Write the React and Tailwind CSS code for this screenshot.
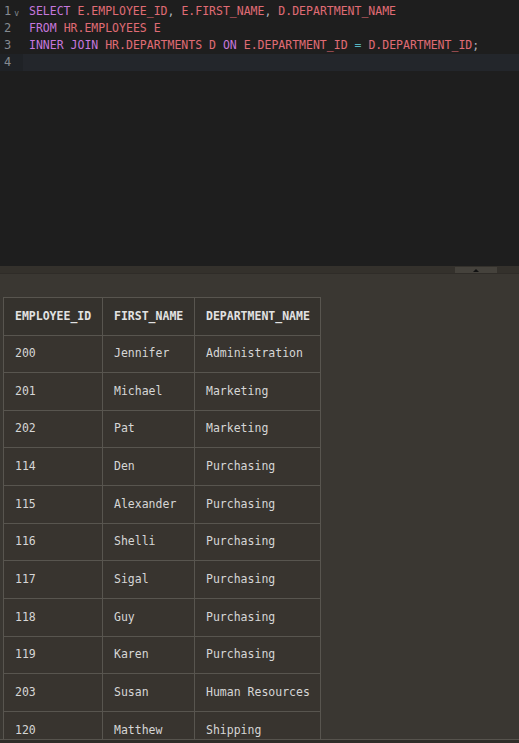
import React from "react";

const K = ({ children }) => <span className="text-[#c678dd]">{children}</span>;
const I = ({ children }) => <span className="text-[#e06c75]">{children}</span>;
const P = ({ children }) => <span className="text-[#abb2bf]">{children}</span>;
const O = ({ children }) => <span className="text-[#56b6c2]">{children}</span>;

const lines = [
  <>
    <K>SELECT</K> <I>E.EMPLOYEE_ID</I>
    <P>,</P> <I>E.FIRST_NAME</I>
    <P>,</P> <I>D.DEPARTMENT_NAME</I>
  </>,
  <>
    <K>FROM</K> <I>HR.EMPLOYEES E</I>
  </>,
  <>
    <K>INNER JOIN</K> <I>HR.DEPARTMENTS D</I> <K>ON</K> <I>E.DEPARTMENT_ID</I> <O>=</O>{" "}
    <I>D.DEPARTMENT_ID</I>
    <P>;</P>
  </>,
  <></>,
];

const rows = [
  ["200", "Jennifer", "Administration"],
  ["201", "Michael", "Marketing"],
  ["202", "Pat", "Marketing"],
  ["114", "Den", "Purchasing"],
  ["115", "Alexander", "Purchasing"],
  ["116", "Shelli", "Purchasing"],
  ["117", "Sigal", "Purchasing"],
  ["118", "Guy", "Purchasing"],
  ["119", "Karen", "Purchasing"],
  ["203", "Susan", "Human Resources"],
  ["120", "Matthew", "Shipping"],
];

export default function App() {
  const mono = { fontFamily: '"DejaVu Sans Mono", "Liberation Mono", monospace' };
  return (
    <div className="w-[519px] h-[743px] overflow-hidden flex flex-col bg-[#1e1e1e]" style={mono}>
      {/* Editor */}
      <div className="h-[266px] shrink-0 bg-[#1e1e1e] pt-[3px] text-[11.5px]">
        {lines.map((l, i) => {
          const active = i === 3;
          return (
            <div key={i} className={`flex h-[17px] leading-[17px] ${active ? "bg-[#23262b]" : ""}`}>
              <div className={`w-[23px] shrink-0 flex items-center pl-[4px] text-[12px] text-[#858a91] ${active ? "bg-[#1f2226]" : ""}`}>
                <span>{i + 1}</span>
                {i === 0 && <span className="ml-[3px] text-[8px] leading-none mt-[5px] text-[#858a91]">v</span>}
              </div>
              <div className="pl-[6px] whitespace-pre">{l}</div>
            </div>
          );
        })}
      </div>
      {/* Divider */}
      <div className="h-[8px] shrink-0 bg-[#34312c] border-b border-[#2f2c28] flex justify-end pr-[22px]">
        <div className="w-[42px] h-[6px] mt-[1px] bg-[#45423c] flex items-center justify-center">
          <div className="w-0 h-0 border-l-[3px] border-r-[3px] border-b-[3px] border-l-transparent border-r-transparent border-b-[#111]" />
        </div>
      </div>
      {/* Results */}
      <div className="flex-1 min-h-0 bg-[#3a3732] flex flex-col">
        <div className="flex-1 min-h-0 overflow-hidden pt-[23px] pl-[3px]">
          <table className="border-collapse table-fixed w-[317px] text-[11.5px] text-[#d6d6d6]">
            <colgroup>
              <col className="w-[99px]" />
              <col className="w-[92px]" />
              <col className="w-[126px]" />
            </colgroup>
            <thead>
              <tr className="h-[37.5px] bg-[#35322d]">
                {["EMPLOYEE_ID", "FIRST_NAME", "DEPARTMENT_NAME"].map((h) => (
                  <th key={h} className="border border-[#58554f] pl-[11px] pr-0 text-left font-bold text-[#e2e2e2] whitespace-nowrap">
                    {h}
                  </th>
                ))}
              </tr>
            </thead>
            <tbody>
              {rows.map((r, i) => (
                <tr key={i} className="h-[37.65px] bg-[#38342f]">
                  {r.map((c, j) => (
                    <td key={j} className="border border-[#58554f] pl-[11px] pr-0 whitespace-nowrap">
                      {c}
                    </td>
                  ))}
                </tr>
              ))}
            </tbody>
          </table>
        </div>
        <div className="h-[4px] shrink-0 border-t border-[#56534d] bg-[#2f2c28]" />
      </div>
    </div>
  );
}
